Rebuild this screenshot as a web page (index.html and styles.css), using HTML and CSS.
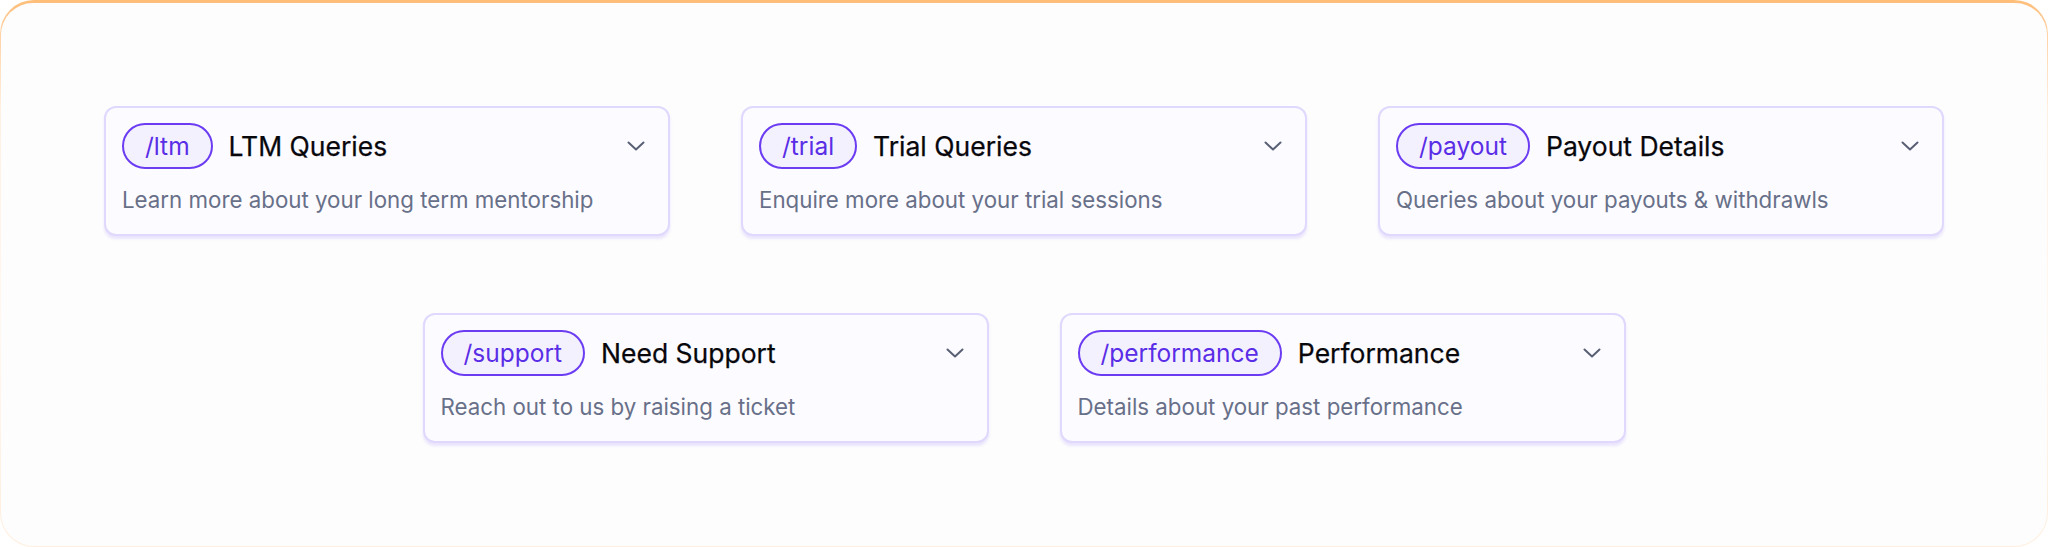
FILE: index.html
```html
<!DOCTYPE html>
<html lang="en">
<head>
<meta charset="utf-8">
<title>Queries</title>
<link rel="stylesheet" href="styles.css">
</head>
<body>
<div class="frame">
  <div class="panel">
    <div class="row">
      <div class="card">
        <div class="head">
          <span class="badge">/ltm</span>
          <span class="title">LTM Queries</span>
          <svg class="chev" viewBox="0 0 18 10" width="18" height="10"><path d="M1.5 1.5 L9 8.5 L16.5 1.5"/></svg>
        </div>
        <p class="desc">Learn more about your long term mentorship</p>
      </div>
      <div class="card">
        <div class="head">
          <span class="badge">/trial</span>
          <span class="title">Trial Queries</span>
          <svg class="chev" viewBox="0 0 18 10" width="18" height="10"><path d="M1.5 1.5 L9 8.5 L16.5 1.5"/></svg>
        </div>
        <p class="desc">Enquire more about your trial sessions</p>
      </div>
      <div class="card">
        <div class="head">
          <span class="badge">/payout</span>
          <span class="title">Payout Details</span>
          <svg class="chev" viewBox="0 0 18 10" width="18" height="10"><path d="M1.5 1.5 L9 8.5 L16.5 1.5"/></svg>
        </div>
        <p class="desc">Queries about your payouts &amp; withdrawls</p>
      </div>
    </div>
    <div class="row">
      <div class="card">
        <div class="head">
          <span class="badge">/support</span>
          <span class="title">Need Support</span>
          <svg class="chev" viewBox="0 0 18 10" width="18" height="10"><path d="M1.5 1.5 L9 8.5 L16.5 1.5"/></svg>
        </div>
        <p class="desc">Reach out to us by raising a ticket</p>
      </div>
      <div class="card">
        <div class="head">
          <span class="badge">/performance</span>
          <span class="title">Performance</span>
          <svg class="chev" viewBox="0 0 18 10" width="18" height="10"><path d="M1.5 1.5 L9 8.5 L16.5 1.5"/></svg>
        </div>
        <p class="desc">Details about your past performance</p>
      </div>
    </div>
  </div>
</div>
</body>
</html>
```
FILE: styles.css
```css
* { box-sizing: border-box; }
html, body { margin: 0; padding: 0; background: #ffffff; }
body { font-family: Inter, "Noto Sans", sans-serif; }

.frame {
  width: 2048px;
  height: 547px;
  padding: 3px 1px 1px 1px;
  border-radius: 34px;
  background: linear-gradient(180deg, #ffbd78 0%, #ffd2a4 6%, #fff0e2 20%, #fff8f1 60%, #ffeedd 100%);
}

.panel {
  height: 100%;
  border-radius: 32px 32px 33px 33px;
  background: #fdfdfd;
  display: flex;
  flex-direction: column;
  align-items: center;
  justify-content: center;
  row-gap: 77px;
}

.row {
  display: flex;
  justify-content: center;
  column-gap: 71px;
}

.card {
  width: 566px;
  height: 130px;
  border: 2px solid #e0d9fd;
  border-radius: 12px;
  background: #fcfbff;
  box-shadow: 0 3px 3px rgba(167, 139, 250, 0.22);
  padding: 15px 23px 16px 16px;
}

.head {
  display: flex;
  align-items: center;
  height: 46px;
}

.badge {
  height: 46px;
  border: 2px solid #6b3cf2;
  border-radius: 999px;
  background: #f4f1ff;
  color: #5a2de6;
  font-size: 24.5px;
  line-height: 42px;
  padding: 0 21px;
  white-space: nowrap;
}

.title {
  margin-left: 16px;
  font-size: 26.5px;
  font-weight: 400;
  color: #08080c;
  white-space: nowrap;
  -webkit-text-stroke: 0.25px #08080c;
}

.chev {
  margin-left: auto;
  fill: none;
  stroke: #596075;
  stroke-width: 2;
  stroke-linecap: round;
  stroke-linejoin: round;
}

.desc {
  margin: 16px 0 0 0;
  font-size: 22.3px;
  line-height: 30px;
  color: #687089;
  white-space: nowrap;
}
```
